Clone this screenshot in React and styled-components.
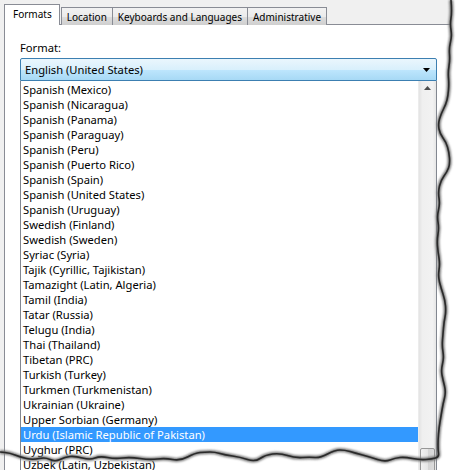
import React from "react";
import styled, { createGlobalStyle, css } from "styled-components";

const GlobalStyle = createGlobalStyle`
  body {
    margin: 0;
    background: #ffffff;
    font-family: "Noto Sans", "Liberation Sans", sans-serif;
  }
`;

const TABS = ["Formats", "Location", "Keyboards and Languages", "Administrative"];

const FORMATS = [
  "Spanish (Mexico)",
  "Spanish (Nicaragua)",
  "Spanish (Panama)",
  "Spanish (Paraguay)",
  "Spanish (Peru)",
  "Spanish (Puerto Rico)",
  "Spanish (Spain)",
  "Spanish (United States)",
  "Spanish (Uruguay)",
  "Swedish (Finland)",
  "Swedish (Sweden)",
  "Syriac (Syria)",
  "Tajik (Cyrillic, Tajikistan)",
  "Tamazight (Latin, Algeria)",
  "Tamil (India)",
  "Tatar (Russia)",
  "Telugu (India)",
  "Thai (Thailand)",
  "Tibetan (PRC)",
  "Turkish (Turkey)",
  "Turkmen (Turkmenistan)",
  "Ukrainian (Ukraine)",
  "Upper Sorbian (Germany)",
  "Urdu (Islamic Republic of Pakistan)",
  "Uyghur (PRC)",
  "Uzbek (Latin, Uzbekistan)",
];

const SELECTED = "Urdu (Islamic Republic of Pakistan)";

// torn paper edge, traced by eye from the screenshot
const RIGHT_EDGE = [
  [451, 0], [452, 12], [450, 24], [452, 36], [449, 48], [450, 60], [448, 72],
  [449, 84], [448, 96], [446, 104], [441, 114], [438, 124], [440, 134],
  [446, 142], [449, 152], [450, 164], [447, 172], [441, 180], [438, 192],
  [440, 204], [437, 216], [439, 228], [437, 240], [438, 252], [440, 264],
  [438, 276], [441, 288], [445, 300], [446, 312], [444, 322], [443, 334],
  [442, 346], [444, 358], [441, 370], [443, 380], [446, 392], [443, 404],
  [441, 416], [439, 428], [438, 440], [438, 450], [439, 457],
];
const BOTTOM_EDGE = [
  [432, 459], [420, 460], [405, 457], [395, 458], [385, 462], [370, 457],
  [355, 453], [345, 450], [335, 450], [320, 458], [310, 457], [295, 458],
  [280, 453], [265, 455], [255, 462], [240, 457], [225, 455], [215, 452],
  [205, 452], [195, 453], [180, 461], [165, 458], [150, 460], [130, 457],
  [115, 459], [100, 456], [90, 460], [75, 456], [65, 457], [55, 462],
  [45, 457], [33, 460], [20, 457], [10, 453], [0, 452],
];

const smooth = (pts) => {
  let d = `M${pts[0][0]},${pts[0][1]}`;
  for (let i = 1; i < pts.length - 1; i++) {
    const mx = (pts[i][0] + pts[i + 1][0]) / 2;
    const my = (pts[i][1] + pts[i + 1][1]) / 2;
    d += ` Q${pts[i][0]},${pts[i][1]} ${mx},${my}`;
  }
  const last = pts[pts.length - 1];
  return d + ` L${last[0]},${last[1]}`;
};

const Frame = styled.div`
  position: relative;
  width: 456px;
  height: 470px;
  overflow: hidden;
  background: #ffffff;
`;

const Dialog = styled.div`
  display: flex;
  flex-direction: column;
  height: 100%;
  padding: 4px 0 0 4px;
  box-sizing: border-box;
  background: #f0f0f0;
  font-size: 11.2px;
  color: #000;
`;

const TabStrip = styled.div`
  display: flex;
  align-items: flex-end;
  height: 21px;
  position: relative;
  z-index: 1;
  font-size: 10px;
`;

const Tab = styled.div`
  box-sizing: border-box;
  height: 18px;
  padding: 0 5px;
  margin-left: -1px;
  display: flex;
  align-items: center;
  border: 1px solid #898c95;
  border-bottom: none;
  background: linear-gradient(#f2f2f2, #ebebeb 50%, #dddddd 51%, #cfcfcf);
  white-space: nowrap;

  ${(p) =>
    p.$active &&
    css`
      height: 21px;
      margin-left: 0;
      margin-right: 2px;
      padding: 0 7px 2px 8px;
      background: #ffffff;
    `}
`;

const Panel = styled.div`
  flex: 1;
  margin-top: -1px;
  margin-right: -20px;
  padding: 0 0 0 15px;
  border: 1px solid #898c95;
  background: #ffffff;
`;

const FieldLabel = styled.div`
  margin-top: 15px;
  line-height: 15px;
  height: 15px;
`;

const Combo = styled.div`
  margin-top: 3px;
  width: 417px;
  height: 23px;
  box-sizing: border-box;
  display: flex;
  align-items: center;
  justify-content: space-between;
  padding: 0 6px 0 4px;
  border: 1px solid #3c7fb1;
  border-radius: 2px 2px 0 0;
  background: linear-gradient(#eaf6fd, #d9f0fc 50%, #bee6fd 51%, #a7d9f5);
`;

const ComboArrow = styled.svg`
  width: 7px;
  height: 4px;
`;

const ListBox = styled.div`
  display: flex;
  width: 417px;
  height: 400px;
  box-sizing: border-box;
  border: 1px solid #828790;
  border-top: none;
  background: #ffffff;
`;

const Items = styled.div`
  flex: 1;
  padding-top: 1px;
`;

const Item = styled.div`
  height: 15px;
  line-height: 15px;
  padding-left: 2px;
  white-space: nowrap;
  background: ${(p) => (p.$selected ? "#3399ff" : "transparent")};
  color: ${(p) => (p.$selected ? "#ffffff" : "#000000")};
`;

const ScrollBar = styled.div`
  width: 17px;
  display: flex;
  flex-direction: column;
  background: linear-gradient(90deg, #e3e3e3, #efefef 20%, #f2f2f2 80%, #e6e6e6);
  border-left: 1px solid #ececec;
`;

const ScrollButton = styled.div`
  height: 17px;
  display: flex;
  align-items: center;
  justify-content: center;
`;

const ScrollTrack = styled.div`
  flex: 1;
  display: flex;
  flex-direction: column;
`;

const Thumb = styled.div`
  margin: 353px 1px 0 1px;
  height: 30px;
  border: 1px solid #979797;
  border-radius: 2px;
  background: linear-gradient(90deg, #f1f1f1, #e6e6e6 50%, #d4d4d4 51%, #dcdcdc);
`;

const TornEdge = styled.svg`
  position: absolute;
  inset: 0;
  pointer-events: none;
`;

export default function App() {
  const edge = smooth([...RIGHT_EDGE, ...BOTTOM_EDGE]);
  const outside = smooth(RIGHT_EDGE) + " L456,470 L456,0 Z";

  return (
    <Frame>
      <GlobalStyle />
      <Dialog>
        <TabStrip>
          {TABS.map((t, i) => (
            <Tab key={t} $active={i === 0}>
              {t}
            </Tab>
          ))}
        </TabStrip>
        <Panel>
          <FieldLabel>Format:</FieldLabel>
          <Combo>
            <span>English (United States)</span>
            <ComboArrow viewBox="0 0 7 4">
              <path d="M0 0 H7 L3.5 4 Z" fill="#000" />
            </ComboArrow>
          </Combo>
          <ListBox>
            <Items>
              {FORMATS.map((f) => (
                <Item key={f} $selected={f === SELECTED}>
                  {f}
                </Item>
              ))}
            </Items>
            <ScrollBar>
              <ScrollButton>
                <svg width="7" height="4" viewBox="0 0 7 4">
                  <path d="M0 4 H7 L3.5 0 Z" fill="#4d4d4d" />
                </svg>
              </ScrollButton>
              <ScrollTrack>
                <Thumb />
              </ScrollTrack>
            </ScrollBar>
          </ListBox>
        </Panel>
      </Dialog>
      <TornEdge width="456" height="470" viewBox="0 0 456 470">
        <defs>
          <filter id="soft" x="-10%" y="-10%" width="120%" height="120%">
            <feGaussianBlur stdDeviation="1.2" />
          </filter>
        </defs>
        <path d={outside} fill="#ffffff" />
        <path
          d={edge}
          fill="none"
          stroke="#777"
          strokeWidth="4"
          filter="url(#soft)"
        />
        <path
          d={edge}
          fill="none"
          stroke="#2a2a2a"
          strokeWidth="1.6"
          strokeLinejoin="round"
        />
      </TornEdge>
    </Frame>
  );
}
